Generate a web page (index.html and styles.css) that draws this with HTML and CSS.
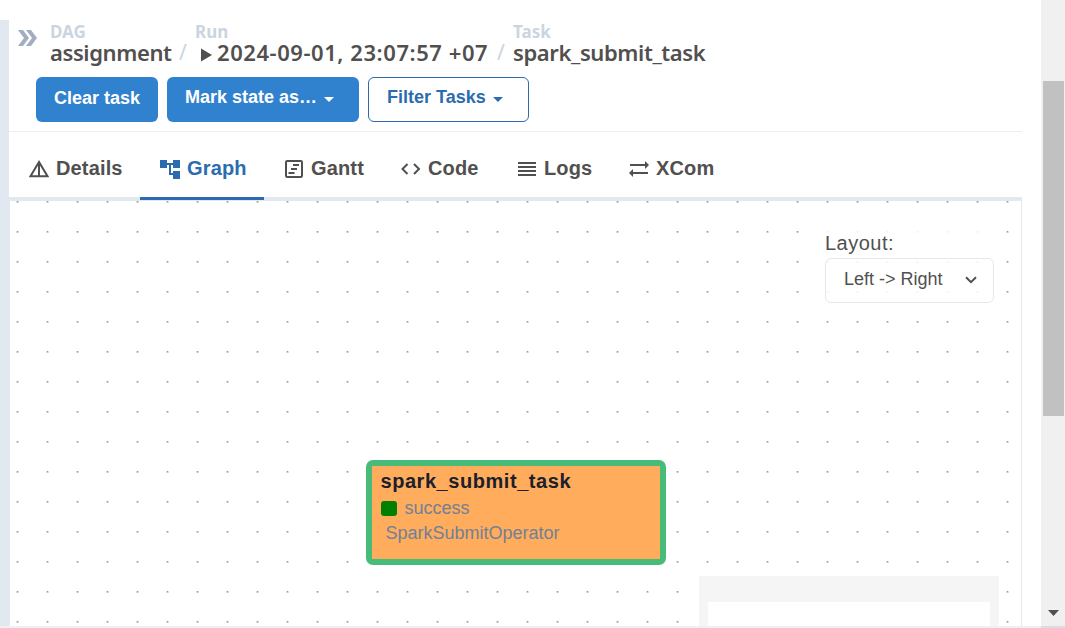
FILE: index.html
```html
<!DOCTYPE html>
<html lang="en">
<head>
<meta charset="utf-8">
<title>spark_submit_task - Graph</title>
<link rel="stylesheet" href="styles.css">
</head>
<body>
<div class="page">
  <div class="divider"></div>
  <main class="panel">
    <header class="header">
      <div class="crumb-row">
        <svg class="expand" width="20" height="18" viewBox="0 0 20 18"><path d="M0 1h5l6 8-6 8H0l6-8zM8 1h5l6 8-6 8H8l6-8z"/></svg>
        <nav class="crumbs">
          <div class="crumb dag"><span class="kind">DAG</span><span class="name">assignment</span></div>
          <span class="slash">/</span>
          <div class="crumb run"><span class="kind">Run</span><span class="name"><svg class="play" width="12" height="14" viewBox="0 0 12 14"><path d="M0 0.5v13L11 7z"/></svg><span>2024-09-01, 23:07:57 +07</span></span></div>
          <span class="slash">/</span>
          <div class="crumb task"><span class="kind">Task</span><span class="name">spark_submit_task</span></div>
        </nav>
      </div>
      <div class="actions">
        <button class="btn clear">Clear task</button>
        <button class="btn mark"><span>Mark state as…</span><svg width="10" height="5" viewBox="0 0 10 5"><path d="M0 0h10L5 5z"/></svg></button>
        <button class="btn filter"><span>Filter Tasks</span><svg width="10" height="5" viewBox="0 0 10 5"><path d="M0 0h10L5 5z"/></svg></button>
      </div>
    </header>
    <nav class="tabs">
      <a class="tab details"><svg width="20" height="20" viewBox="0 0 20 20"><path class="line" d="M10 3L1.500 17.200h17zM10 3v14"/></svg><span>Details</span></a>
      <a class="tab graph"><svg width="20" height="20" viewBox="0 0 20 20"><path d="M0 1h7v3h6V1h7v8h-7V6h-2v8h2v-2h7v8h-7v-4H9V6H7v3H0z"/></svg><span>Graph</span></a>
      <a class="tab gantt"><svg width="20" height="20" viewBox="0 0 20 20"><rect class="line" x="2" y="2" width="16" height="16" rx="1.2"/><path class="line" d="M9 6h6M7 10h6M4.500 14h6"/></svg><span>Gantt</span></a>
      <a class="tab code"><svg width="20" height="20" viewBox="0 0 20 20"><path class="line" d="M6.500 5L1.500 10l5 5M13 5l5 5-5 5"/></svg><span>Code</span></a>
      <a class="tab logs"><svg width="20" height="20" viewBox="0 0 20 20"><path d="M1 3h18v2H1zM1 7h18v2H1zM1 11h18v2H1zM1 15h18v2H1z"/></svg><span>Logs</span></a>
      <a class="tab xcom"><svg width="20" height="20" viewBox="0 0 20 20"><path d="M1 5h15V2l4 4-4 4V7H1zM19 13H4v-3l-4 4 4 4v-3h15z"/></svg><span>XCom</span></a>
    </nav>
    <section class="canvas">
      <svg class="dots" width="1011" height="425">
        <defs><pattern id="grid" width="30" height="30" patternUnits="userSpaceOnUse"><path fill="#dedede" d="M6 0h3v2H6z"/><path fill="#999" d="M7 0h1v1H7z"/><path fill="#c8c8c8" d="M7 1h1v1H7z"/></pattern></defs>
        <rect width="1011" height="425" fill="url(#grid)"/>
      </svg>
      <div class="layout">
        <label>Layout:</label>
        <div class="select"><span>Left -&gt; Right</span><svg width="12" height="8" viewBox="0 0 12 8"><path class="line" d="M1 1.200l5 5 5-5"/></svg></div>
      </div>
      <div class="node">
        <div class="node-title">spark_submit_task</div>
        <div class="node-state"><i></i><span>success</span></div>
        <div class="node-operator">SparkSubmitOperator</div>
      </div>
      <div class="minimap"><div class="viewport"></div></div>
    </section>
  </main>
  <aside class="scrollbar"><div class="thumb"></div><svg width="11" height="6" viewBox="0 0 11 6"><path d="M0 0h11L5.500 6z"/></svg></aside>
</div>
<div class="bottom"><div class="corner"></div></div>
</body>
</html>
```
FILE: styles.css
```css
* { box-sizing: border-box; }
body {
  margin: 0;
  width: 1065px;
  height: 628px;
  overflow: hidden;
  background: #fff;
  color: #51504f;
  font-family: "Liberation Sans", Arial, sans-serif;
}
svg { display: block; flex: none; fill: currentColor; }
.line { fill: none; stroke: currentColor; stroke-width: 2; }
.page { display: flex; height: 626px; }
.divider { width: 9px; margin-top: 20px; background: #e2e8f0; }
.panel { width: 1013px; margin-top: 20px; }
.header { height: 112px; border-bottom: 1px solid #edf0f2; }
.crumb-row { display: flex; height: 57px; padding-left: 9px; }
.expand { margin-top: 9px; color: #a0aec0; }
.crumbs { display: flex; padding-left: 12px; font-family: "Noto Sans", "Open Sans", sans-serif; font-weight: 600; white-space: nowrap; }
.crumb { display: flex; flex-direction: column; padding-top: 1px; }
.kind { height: 21px; color: #cbd5e0; font-size: 17px; line-height: 21px; font-weight: 700; }
.name { display: flex; font-size: 22px; line-height: 20px; }
.dag { width: 121px; letter-spacing: -.4px; }
.run { width: 294px; letter-spacing: .56px; }
.run .kind, .dag .kind { letter-spacing: 0; }
.task .name { letter-spacing: -.4px; }
.slash { width: 24px; padding: 22px 0 0 8px; color: #cbd5e0; font-size: 21px; line-height: 20px; font-weight: 400; }
.play { margin: 6px 4px 0 6px; }
.actions { display: flex; gap: 9px; padding-left: 27px; }
.btn {
  display: flex;
  height: 45px;
  padding: 0 0 0 18px;
  border: 0;
  border-radius: 6px;
  background: #3182ce;
  color: #fff;
  font: bold 18px/43px "Liberation Sans", Arial, sans-serif;
  white-space: nowrap;
}
.btn svg { margin: 20px 0 0 7px; }
.clear { width: 122px; }
.mark { width: 192px; line-height: 41px; }
.filter { width: 161px; border: 1px solid #2b6cb0; background: #fff; color: #2b6cb0; line-height: 39px; }
.filter svg { margin-top: 19px; }
.tabs { display: flex; height: 69px; border-bottom: 4px solid #e2e8f0; }
.tab { display: flex; gap: 7px; height: 68px; padding: 27px 0 0 20px; font-size: 20px; line-height: 20px; font-weight: bold; letter-spacing: .15px; }
.tab span { margin-top: -1px; }
.tab svg { margin-top: -.5px; }
.details { width: 131px; }
.graph { width: 124px; border-bottom: 3px solid #2b6cb0; color: #2b6cb0; }
.gantt { width: 117px; }
.code { width: 116px; }
.logs { width: 112px; }
.canvas { position: relative; height: 425px; overflow: hidden; border: solid #e2e8f0; border-width: 0 1px; }
.dots { position: absolute; left: 0; top: 0; }
.layout { position: absolute; left: 815px; top: 30px; width: 169px; background: rgba(255,255,255,.85); }
.layout label { display: block; height: 27px; font-size: 20px; line-height: 24px; letter-spacing: .5px; }
.select { display: flex; justify-content: space-between; height: 45px; padding: 0 16px 0 18px; border: 1px solid #e2e8f0; border-radius: 6px; font-size: 18px; line-height: 40px; }
.select svg { margin-top: 17px; }
.node { position: absolute; left: 355.5px; top: 258.500px; width: 300px; height: 105px; padding: 5px 9px; border: 6px solid #48bb78; border-radius: 7px; background: #ffac5c; color: #718096; font-size: 18px; }
.node-title { height: 27px; color: #1a202c; font-size: 20px; line-height: 21px; font-weight: bold; letter-spacing: .55px; }
.node-state { display: flex; gap: 8px; height: 25px; line-height: 20px; }
.node-state i { width: 16px; height: 15px; margin-top: 3.500px; border-radius: 3px; background: green; }
.node-operator { padding-left: 5px; line-height: 20px; }
.minimap { position: absolute; left: 689px; top: 375px; width: 300px; height: 50px; padding: 26px 9px 0; background: #f5f5f5; }
.viewport { height: 24px; background: #fff; }
.scrollbar { display: flex; flex-direction: column; width: 24px; margin-left: 19px; padding: 81px 1px 0 2px; background: #f0f0f0; color: #505050; }
.thumb { height: 335px; background: #c1c1c1; }
.scrollbar svg { margin: 194px 0 0 5px; }
.bottom { display: flex; justify-content: flex-end; height: 2px; background: #f0f0f0; }
.corner { width: 24px; background: #dcdcdc; }
```
